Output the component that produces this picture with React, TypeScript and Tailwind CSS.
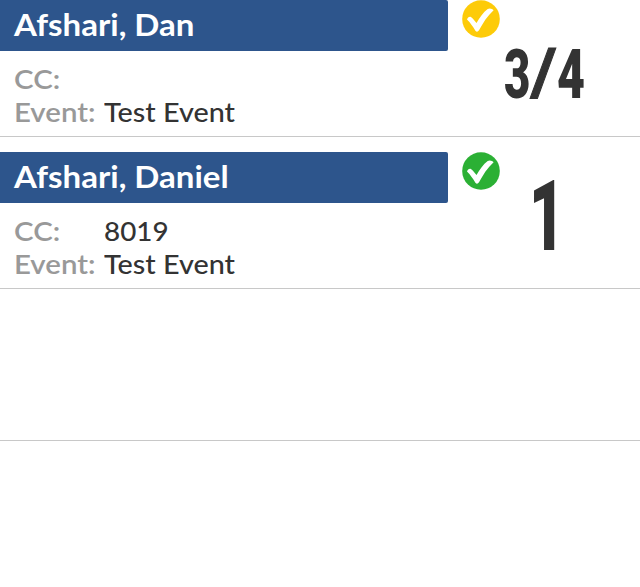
import clsx from "clsx";

type Entry = {
  name: string;
  cc: string;
  event: string;
  status: "partial" | "full";
};

function StatusIcon({ status }: { status: Entry["status"] }) {
  return (
    <svg viewBox="0 0 38 38" className="mt-[0.4px] w-[38px] h-[38px] shrink-0">
      <circle cx="19" cy="19" r="18.8" fill={status === "full" ? "#2bb034" : "#fdcb09"} />
      <path
        d="M5 19.6C5.5 17.6 7.4 16.2 8.9 17C10.6 18 12.5 20.6 14.5 23C17.7 17.8 21.2 12.2 25.7 9C27.8 7.9 30.2 8.6 31.6 10.3C25.5 15.7 20.9 23.2 17 30.3C15.8 32 14.6 32.2 13.4 30.7C11.2 27 8.3 22.9 5 19.6Z"
        fill="#fff"
      />
    </svg>
  );
}

function Details({ entry }: { entry: Entry }) {
  return (
    <div className="grid grid-cols-[90px_1fr] pl-[14px] pt-[11px] text-[27px] leading-[33px] text-[#333]">
      <span className="origin-left scale-x-[1.09] font-semibold text-[#999]">CC:</span>
      <span className="origin-left scale-x-[1.03] font-medium">{entry.cc}</span>
      <span className="origin-left scale-x-[1.09] font-semibold text-[#999]">Event:</span>
      <span className="origin-left scale-x-[1.065] font-medium whitespace-nowrap">{entry.event}</span>
    </div>
  );
}

function Row({ entry, first, children }: { entry?: Entry; first?: boolean; children?: React.ReactNode }) {
  return (
    <li className={clsx("flex border-b border-[#c8c8c8]", first ? "h-[137px]" : "h-[152px] pt-[15px]")}>
      {entry && (
        <>
          <div className="w-[448px] shrink-0">
            <h2 className="h-[51px] rounded-r-[2px] bg-[#2d558c] pl-[14px] text-[31px] leading-[49px] font-bold text-white">
              <span className="inline-block origin-left scale-x-[1.065]">{entry.name}</span>
            </h2>
            <Details entry={entry} />
          </div>
          <div className="ml-[14px]">
            <StatusIcon status={entry.status} />
          </div>
          <div className="font-['Roboto',sans-serif] font-black text-[#333]">{children}</div>
        </>
      )}
    </li>
  );
}

export default function App() {
  return (
    <ul className="w-[640px] h-[587px] overflow-hidden bg-white font-['Lato',sans-serif]">
      <Row first entry={{ name: "Afshari, Dan", cc: "", event: "Test Event", status: "partial" }}>
        <div className="ml-[4px] mt-[39px] flex text-[69px] leading-[72px]">
          <span className="w-[26px] origin-left scale-x-[0.66]">3</span>
          <span className="w-[27px] origin-left scale-x-[1.35] font-['Liberation_Sans',sans-serif] font-normal [-webkit-text-stroke:0.8px_#333]">/</span>
          <span className="w-[28px] origin-left scale-x-[0.7]">4</span>
        </div>
      </Row>
      <Row entry={{ name: "Afshari, Daniel", cc: "8019", event: "Test Event", status: "full" }}>
        <div className="ml-[29px] mt-[15px] origin-left scale-x-[0.63] text-[98px] leading-[100px]">1</div>
      </Row>
      <Row />
    </ul>
  );
}
